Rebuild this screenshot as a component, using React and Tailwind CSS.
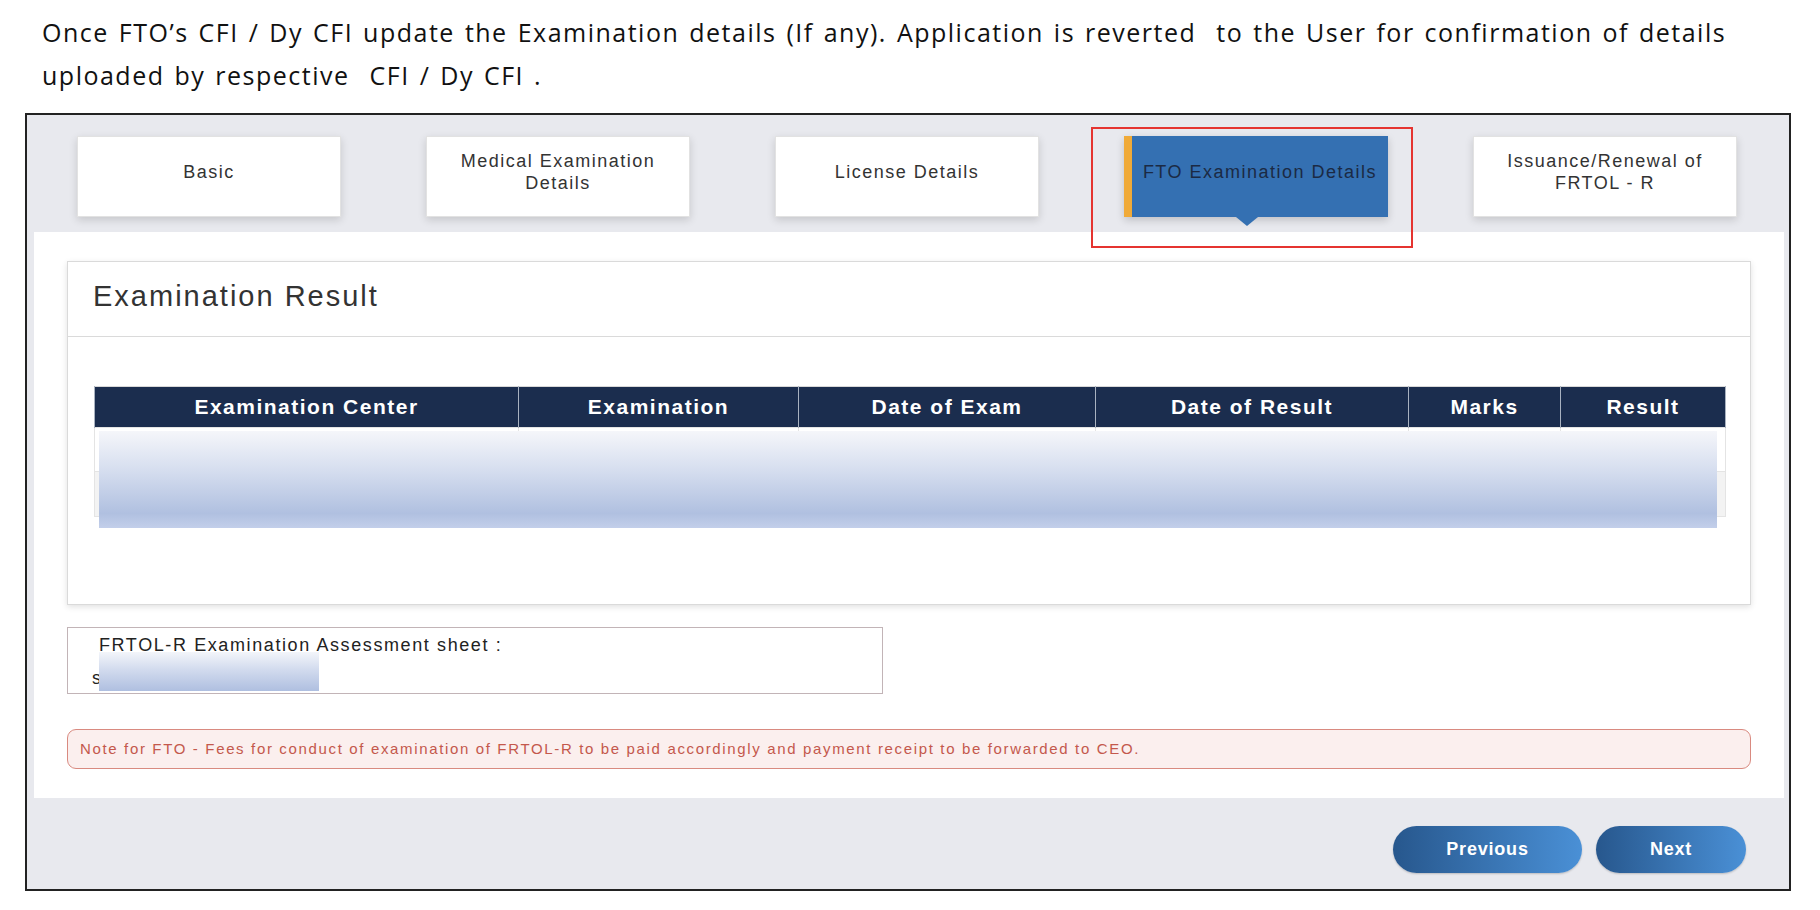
import React from 'react';

const tabs = [
  { id: 'basic', label: ['Basic'] },
  { id: 'medical', label: ['Medical Examination', 'Details'] },
  { id: 'license', label: ['License Details'] },
  { id: 'fto', label: ['FTO Examination Details'], active: true },
  { id: 'issuance', label: ['Issuance/Renewal of', 'FRTOL - R'] },
];

const columns = [
  { title: 'Examination Center', width: 'w-[424px]' },
  { title: 'Examination', width: 'w-[280px]' },
  { title: 'Date of Exam', width: 'w-[297px]' },
  { title: 'Date of Result', width: 'w-[313px]' },
  { title: 'Marks', width: 'w-[152px]' },
  { title: 'Result', width: 'w-[165px]' },
];

const Tab = ({ tab }) => {
  if (tab.active) {
    return (
      <div className="relative w-[264px] h-[81px]">
        <div className="flex h-full items-center justify-center pb-[10px] bg-[#3470b2] border-l-[8px] border-[#f0aa38] shadow-[0_3px_8px_rgba(0,0,0,0.18)] text-[#1b2a44] text-[18px] tracking-[1.5px] leading-[22px] text-center">
          {tab.label[0]}
        </div>
        <div className="absolute left-[112px] -bottom-[9px] w-0 h-0 border-l-[11px] border-r-[11px] border-t-[9px] border-l-transparent border-r-transparent border-t-[#3470b2]" />
        <div className="absolute -left-[33px] -top-[9px] w-[322px] h-[121px] border-2 border-[#e53430] pointer-events-none" />
      </div>
    );
  }
  return (
    <div className="flex w-[264px] h-[81px] flex-col items-center justify-center pb-[10px] bg-white border border-[#e2e2e2] shadow-[0_3px_8px_rgba(0,0,0,0.15)] text-[#333] text-[18px] tracking-[1.5px] leading-[22px] text-center">
      {tab.label.map((line) => (
        <span key={line}>{line}</span>
      ))}
    </div>
  );
};

const App = () => {
  return (
    <div className="w-[1820px] h-[910px] bg-white overflow-hidden font-['Liberation_Sans',Arial,sans-serif]">
      <div className="pl-[42px] pt-[11px] font-['Open_Sans',sans-serif] text-[25px] leading-[43px] tracking-[1.5px] [word-spacing:2px] text-[#111]">
        Once FTO’s CFI / Dy CFI update the Examination details (If any). Application is reverted&nbsp; to the User for confirmation of details
        <br />
        uploaded by respective&nbsp; CFI / Dy CFI .
      </div>

      <div className="relative mt-[16px] ml-[25px] w-[1766px] h-[778px] border-2 border-[#222] bg-[#e8e9ee] flex flex-col">
        {/* tabs */}
        <div className="flex gap-[85px] pl-[50px] pt-[21px]">
          {tabs.map((tab) => (
            <Tab key={tab.id} tab={tab} />
          ))}
        </div>

        {/* content */}
        <div className="mt-[15px] ml-[7px] mr-[5px] bg-white px-[33px] pt-[29px] pb-[29px]">
          <div className="h-[344px] border border-[#dadada] shadow-[0_2px_6px_rgba(0,0,0,0.12)] bg-white">
            <div className="h-[75px] border-b border-[#dadada] flex items-center pl-[25px] pb-[4px] text-[29px] tracking-[2px] text-[#333]">
              Examination Result
            </div>
            <div className="pl-[26px] pr-[24px] pt-[49px]">
              <div className="relative">
                <table className="border-collapse border border-[#d8d8d8]">
                  <thead>
                    <tr className="bg-[#1b2d4e] h-[41px]">
                      {columns.map((col) => (
                        <th
                          key={col.title}
                          className={`${col.width} border-x border-[#a9b2c0] text-white font-bold text-[21px] tracking-[1.5px] text-center`}
                        >
                          {col.title}
                        </th>
                      ))}
                    </tr>
                  </thead>
                  <tbody>
                    <tr className="h-[44px] bg-white">
                      {columns.map((col) => (
                        <td key={col.title} className="border border-[#e4e4e4]" />
                      ))}
                    </tr>
                    <tr className="h-[45px] bg-[#f3f3f3]">
                      {columns.map((col) => (
                        <td key={col.title} className="border border-[#e4e4e4]" />
                      ))}
                    </tr>
                  </tbody>
                </table>
                <div className="absolute left-[5px] top-[45px] w-[1618px] h-[97px] bg-[linear-gradient(to_bottom,#f5f6fa_0%,#d6deef_40%,#b0c0e0_85%,#c3cfea_100%)]" />
              </div>
            </div>
          </div>

          <div className="relative mt-[22px] w-[816px] h-[67px] border border-[#c2b4b7] pl-[24px] pt-[6px] text-[18px] tracking-[1.6px] text-[#222] leading-[22px]">
            <div className="ml-[7px]">FRTOL-R Examination Assessment sheet :</div>
            <div className="mt-[11px]">s</div>
            <div className="absolute left-[31px] top-[24px] w-[220px] h-[39px] bg-[linear-gradient(to_bottom,#f3f5fa_0%,#d2dbee_45%,#afbfe0_100%)]" />
          </div>

          <div className="mt-[35px] h-[40px] rounded-[9px] border border-[#d98a80] bg-[#fbefee] flex items-center pl-[12px] text-[15px] tracking-[1.65px] text-[#c4584c]">
            Note for FTO - Fees for conduct of examination of FRTOL-R to be paid accordingly and payment receipt to be forwarded to CEO.
          </div>
        </div>

        {/* actions */}
        <div className="flex justify-end gap-[14px] pr-[43px] pt-[28px]">
          <button className="w-[189px] h-[47px] rounded-full bg-[linear-gradient(to_right,#27578d,#4a90d6)] text-white font-bold text-[18px] tracking-[0.8px] shadow-[0_1px_2px_rgba(0,0,0,0.2)]">
            Previous
          </button>
          <button className="w-[150px] h-[47px] rounded-full bg-[linear-gradient(to_right,#27578d,#4a90d6)] text-white font-bold text-[18px] tracking-[0.8px] shadow-[0_1px_2px_rgba(0,0,0,0.2)]">
            Next
          </button>
        </div>
      </div>
    </div>
  );
};

export default App;
